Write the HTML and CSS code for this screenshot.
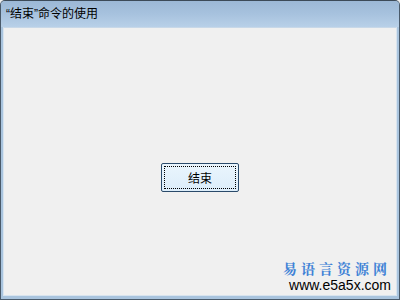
FILE: index.html
```html
<!DOCTYPE html>
<html lang="zh">
<head>
  <meta charset="UTF-8">
  <title>“结束”命令的使用</title>
  <link rel="stylesheet" href="styles.css">
</head>
<body>
  <div class="janela">
    <div class="titulo">“结束”命令的使用</div>
    <div class="cliente">
      <button class="botao"><span class="foco">结束</span></button>
      <div class="marca">
        <div class="marca-nome">易语言资源网</div>
        <div class="marca-url">www.e5a5x.com</div>
      </div>
    </div>
  </div>
</body>
</html>
```

FILE: styles.css
```css
* {
  margin: 0;
  padding: 0;
  box-sizing: border-box;
}

body {
  width: 400px;
  height: 300px;
  overflow: hidden;
  font-family: "Noto Sans CJK SC", "Liberation Sans", sans-serif;
  background: #f0f0f0;
}

.janela {
  width: 400px;
  height: 300px;
  display: flex;
  flex-direction: column;
  border: 1px solid #4a5a6a;
  border-top-color: #3c4a58;
  border-radius: 5px 5px 0 0;
  background: #a9c4de;
  padding: 0 2px 3px 2px;
}

.titulo {
  height: 26px;
  flex-shrink: 0;
  padding-top: 3px;
  padding-left: 5px;
  margin: 0 -2px;
  font-family: "Liberation Sans", "Noto Sans CJK SC", sans-serif;
  font-size: 12px;
  color: #000;
  background: linear-gradient(to bottom, #9cb8d6 0%, #a7c2de 50%, #b8d0e8 100%);
  border-radius: 4px 4px 0 0;
}

.cliente {
  flex: 1;
  position: relative;
  background: #f0f0f0;
  border: 1px solid #d8e4ef;
  border-top-color: #c8d8e8;
  display: flex;
  align-items: flex-start;
  justify-content: center;
  padding-top: 135px;
}

.botao {
  width: 78px;
  height: 29px;
  padding: 2px;
  border: 1px solid #2a4a6a;
  border-radius: 2px;
  background: linear-gradient(to bottom, #eaf5fd 0%, #dcedfa 100%);
  font-family: "Noto Sans CJK SC", sans-serif;
  font-size: 12px;
  color: #000;
}

.foco {
  display: flex;
  align-items: center;
  justify-content: center;
  height: 100%;
  border: 1px dotted #000;
}

.marca {
  position: absolute;
  right: 5px;
  bottom: 2px;
  text-align: right;
}

.marca-nome {
  font-family: "Noto Serif CJK SC", "Noto Sans CJK SC", serif;
  font-size: 14px;
  font-weight: bold;
  color: #3f82d6;
  letter-spacing: 4px;
  line-height: 18px;
}

.marca-url {
  font-family: "Liberation Sans", sans-serif;
  font-size: 14px;
  color: #000;
  line-height: 16px;
}
```
